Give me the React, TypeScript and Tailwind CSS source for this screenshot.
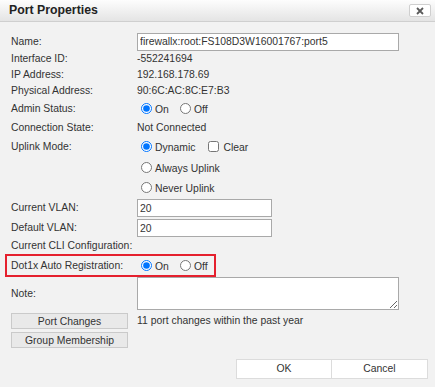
import React from 'react';

const Label = ({ children }: { children: React.ReactNode }) => (
  <div className="w-[126px] shrink-0">{children}</div>
);

const Radio = ({ label, checked, name }: { label: string; checked?: boolean; name: string }) => (
  <label className="flex items-center">
    <input
      type="radio"
      name={name}
      defaultChecked={checked}
      className="ml-[4px] mr-[3px] h-[11px] w-[11px] accent-[#0075ff]"
    />
    <span className="mt-[2px]">{label}</span>
  </label>
);

const App = () => {
  return (
    <div
      className="h-[387px] w-[435px] overflow-hidden bg-[#f2f2f2] text-[10.4px] text-[#333]"
      style={{ fontFamily: '"Liberation Sans", Arial, sans-serif' }}
    >
      {/* title bar */}
      <div className="flex h-[22px] items-center justify-between border-b border-[#cfcfcf] bg-gradient-to-b from-[#fdfdfd] to-[#e4e4e4] pl-[9px] pr-[4px]">
        <span className="text-[12.3px] font-bold text-[#222]">Port Properties</span>
        <button className="flex h-[13px] w-[22px] items-center justify-center rounded-[2px] border border-[#cfcfcf] bg-white">
          <svg width="8" height="8" viewBox="0 0 8 8">
            <path d="M1 1L7 7M7 1L1 7" stroke="#5a5a5a" strokeWidth="1.8" />
          </svg>
        </button>
      </div>

      <div className="flex flex-col pt-[10px]">
        <div className="flex h-[19px] items-center pl-[11px]">
          <Label>Name:</Label>
          <input
            defaultValue="firewallx:root:FS108D3W16001767:port5"
            className="h-[18px] w-[262px] border border-[#a9a9a9] bg-white px-[2px] text-[10.4px] text-[#333] outline-none"
          />
        </div>
        <div className="flex h-[16px] items-center pl-[11px]">
          <Label>Interface ID:</Label>
          <span>-552241694</span>
        </div>
        <div className="flex h-[16px] items-center pl-[11px]">
          <Label>IP Address:</Label>
          <span>192.168.178.69</span>
        </div>
        <div className="flex h-[16px] items-center pl-[11px]">
          <Label>Physical Address:</Label>
          <span>90:6C:AC:8C:E7:B3</span>
        </div>
        <div className="flex h-[20px] items-center pl-[11px]">
          <Label>Admin Status:</Label>
          <div className="flex items-center gap-[7px]">
            <Radio name="admin" label="On" checked />
            <Radio name="admin" label="Off" />
          </div>
        </div>
        <div className="flex h-[17px] items-center pl-[11px]">
          <Label>Connection State:</Label>
          <span>Not Connected</span>
        </div>
        <div className="flex pl-[11px]">
          <div className="flex h-[21px] w-[126px] shrink-0 items-center">Uplink Mode:</div>
          <div className="flex flex-col">
            <div className="flex h-[21px] items-center">
              <Radio name="uplink" label="Dynamic" checked />
              <label className="ml-[13px] flex items-center">
                <input type="checkbox" className="mr-[4px] h-[11px] w-[11px]" />
                <span className="mt-[2px]">Clear</span>
              </label>
            </div>
            <div className="flex h-[21px] items-center">
              <Radio name="uplink" label="Always Uplink" />
            </div>
            <div className="flex h-[20px] items-center">
              <Radio name="uplink" label="Never Uplink" />
            </div>
          </div>
        </div>
        <div className="flex h-[20px] items-center pl-[11px]">
          <Label>Current VLAN:</Label>
          <input
            defaultValue="20"
            className="h-[18px] w-[135px] border border-[#a9a9a9] bg-white px-[2px] text-[10.4px] text-[#333] outline-none"
          />
        </div>
        <div className="flex h-[20px] items-center pl-[11px]">
          <Label>Default VLAN:</Label>
          <input
            defaultValue="20"
            className="h-[18px] w-[135px] border border-[#a9a9a9] bg-white px-[2px] text-[10.4px] text-[#333] outline-none"
          />
        </div>
        <div className="flex h-[16px] items-center pl-[11px]">
          <Label>Current CLI Configuration:</Label>
        </div>
        <div className="ml-[5px] flex h-[23px] w-[211px] items-center border-2 border-[#e5202e] pl-[4px]">
          <Label>Dot1x Auto Registration:</Label>
          <div className="flex items-center gap-[7px]">
            <Radio name="dot1x" label="On" checked />
            <Radio name="dot1x" label="Off" />
          </div>
        </div>
        <div className="flex h-[33px] items-center pl-[11px]">
          <Label>Note:</Label>
          <textarea className="h-[33px] w-[262px] resize border border-[#a9a9a9] bg-white outline-none" />
        </div>
        <div className="mt-[3px] flex h-[16px] items-center pl-[11px]">
          <button className="h-[16px] w-[117px] border border-[#cacaca] bg-[#e9e9e9] text-[10.4px] text-[#333]">
            Port Changes
          </button>
          <span className="ml-[9px]">11 port changes within the past year</span>
        </div>
        <div className="mt-[3px] flex h-[16px] items-center pl-[11px]">
          <button className="h-[16px] w-[117px] border border-[#cacaca] bg-[#e9e9e9] text-[10.4px] text-[#333]">
            Group Membership
          </button>
        </div>
        <div className="mt-[11px] flex justify-end pr-[7px]">
          <button className="h-[20px] w-[96px] border border-[#dcdcdc] bg-white text-[10.4px] text-[#333]">
            OK
          </button>
          <button className="h-[20px] w-[96px] border border-l-0 border-[#dcdcdc] bg-white text-[10.4px] text-[#333]">
            Cancel
          </button>
        </div>
      </div>
    </div>
  );
};

export default App;
